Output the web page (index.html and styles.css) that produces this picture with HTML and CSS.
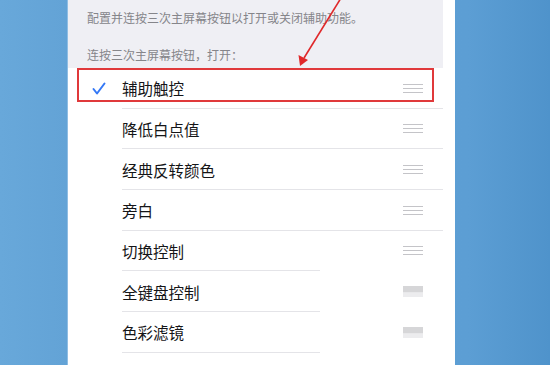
FILE: index.html
```html
<!DOCTYPE html>
<html lang="zh">
<head>
<meta charset="utf-8">
<link rel="stylesheet" href="styles.css">
</head>
<body>
<div class="stage">
  <div class="panel">
    <div class="header">
      <p class="note">配置并连按三次主屏幕按钮以打开或关闭辅助功能。</p>
      <p class="label">连按三次主屏幕按钮，打开：</p>
    </div>
    <ul class="list">
      <li class="row">
        <span class="check"><svg width="16" height="14" viewBox="0 0 16 14"><path d="M3.5 7 L7 11.5 L14.5 1.5" fill="none" stroke="#3478f6" stroke-width="2" stroke-linecap="round" stroke-linejoin="round"/></svg></span>
        <span class="name">辅助触控</span>
        <span class="handle"><i></i><i></i><i></i></span>
      </li>
      <li class="row">
        <span class="check"></span>
        <span class="name">降低白点值</span>
        <span class="handle"><i></i><i></i><i></i></span>
      </li>
      <li class="row">
        <span class="check"></span>
        <span class="name">经典反转颜色</span>
        <span class="handle"><i></i><i></i><i></i></span>
      </li>
      <li class="row">
        <span class="check"></span>
        <span class="name">旁白</span>
        <span class="handle"><i></i><i></i><i></i></span>
      </li>
      <li class="row short">
        <span class="check"></span>
        <span class="name">切换控制</span>
        <span class="handle"><i></i><i></i><i></i></span>
      </li>
      <li class="row short">
        <span class="check"></span>
        <span class="name">全键盘控制</span>
        <span class="block"></span>
      </li>
      <li class="row short">
        <span class="check"></span>
        <span class="name">色彩滤镜</span>
        <span class="block"></span>
      </li>
    </ul>
    <div class="highlight"></div>
  </div>
  <svg class="arrow" width="550" height="80" viewBox="0 0 550 80">
    <line x1="341" y1="-2" x2="304" y2="58" stroke="#e0282a" stroke-width="1.6"/>
    <polygon points="300,66 298.5,55 308,60" fill="#e0282a"/>
  </svg>
</div>
</body>
</html>
```

FILE: styles.css
```css
html, body {
  margin: 0;
  padding: 0;
}
body {
  width: 550px;
  height: 365px;
  overflow: hidden;
  background: linear-gradient(90deg, #68a8da 0%, #63a3d6 12%, #5c9ed4 85%, #4f93cb 100%);
  font-family: "Noto Sans CJK SC", "Noto Sans", sans-serif;
}
.stage {
  position: relative;
  width: 550px;
  height: 365px;
}
.panel {
  position: relative;
  margin-left: 68px;
  width: 387px;
  height: 365px;
  background: #ffffff;
  box-shadow: -1px 0 0 #8fbde3;
}
.header {
  width: 375px;
  height: 68px;
  background: #efeff4;
  padding: 9px 0 0 19px;
  box-sizing: border-box;
}
.header p {
  margin: 0;
  font-size: 12px;
  line-height: 18px;
  color: #85858a;
}
.header .label {
  margin-top: 19px;
}
.list {
  list-style: none;
  margin: 0;
  padding: 0;
  width: 375px;
}
.row {
  position: relative;
  display: flex;
  align-items: center;
  height: 40.67px;
}
.row::after {
  content: "";
  position: absolute;
  left: 54px;
  right: 0;
  bottom: 0;
  height: 1px;
  background: #e4e4e8;
}
.row.short::after {
  right: 123px;
}
.check {
  width: 54px;
  display: flex;
  justify-content: flex-start;
  padding-left: 22px;
  box-sizing: border-box;
  padding-top: 1px;
}
.name {
  flex: 1;
  font-size: 15.5px;
  color: #151517;
  line-height: 20px;
}
.handle {
  width: 20px;
  margin-right: 20px;
  display: flex;
  flex-direction: column;
  gap: 3px;
}
.handle i {
  display: block;
  height: 1px;
  background: #c4c4c8;
}
.block {
  width: 20px;
  height: 11px;
  margin-right: 20px;
  background: linear-gradient(180deg, #d6d6d8 0%, #d6d6d8 55%, #ececee 60%, #ececee 100%);
}
.highlight {
  position: absolute;
  left: 9px;
  top: 68px;
  width: 357px;
  height: 34px;
  border: 2px solid #e0393b;
  box-sizing: border-box;
}
.arrow {
  position: absolute;
  left: 0;
  top: 0;
}
```
